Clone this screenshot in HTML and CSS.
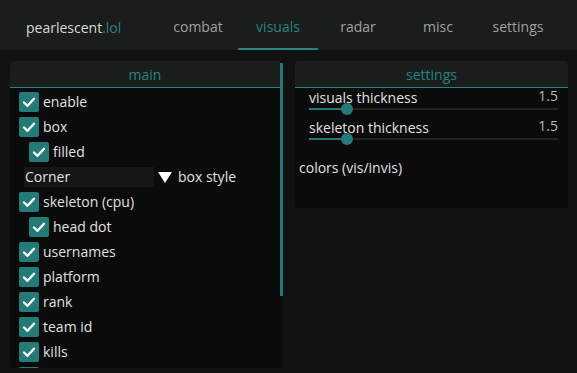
FILE: index.html
```html
<!DOCTYPE html>
<html>
<head>
<meta charset="utf-8">
<link rel="stylesheet" href="styles.css">
</head>
<body>
<header class="topbar">
  <div class="logo">pearlescent<span class="accent">.lol</span></div>
  <nav class="tabs">
    <div class="tab">combat</div>
    <div class="tab active">visuals</div>
    <div class="tab">radar</div>
    <div class="tab">misc</div>
    <div class="tab">settings</div>
  </nav>
</header>
<main class="content">
  <section class="panel panel-main">
    <div class="panel-inner">
      <div class="panel-title">main</div>
      <div class="list">
        <div class="row"><span class="cb"><svg viewBox="0 0 20 20"><path d="M5 10.5 L8.5 13.8 L15 6.8"/></svg></span><span class="lbl">enable</span></div>
        <div class="row"><span class="cb"><svg viewBox="0 0 20 20"><path d="M5 10.5 L8.5 13.8 L15 6.8"/></svg></span><span class="lbl">box</span></div>
        <div class="row sub"><span class="cb"><svg viewBox="0 0 20 20"><path d="M5 10.5 L8.5 13.8 L15 6.8"/></svg></span><span class="lbl">filled</span></div>
        <div class="row combo-row"><span class="combo">Corner</span><span class="arrow"></span><span class="lbl combo-lbl">box style</span></div>
        <div class="row"><span class="cb"><svg viewBox="0 0 20 20"><path d="M5 10.5 L8.5 13.8 L15 6.8"/></svg></span><span class="lbl">skeleton (cpu)</span></div>
        <div class="row sub"><span class="cb"><svg viewBox="0 0 20 20"><path d="M5 10.5 L8.5 13.8 L15 6.8"/></svg></span><span class="lbl">head dot</span></div>
        <div class="row"><span class="cb"><svg viewBox="0 0 20 20"><path d="M5 10.5 L8.5 13.8 L15 6.8"/></svg></span><span class="lbl">usernames</span></div>
        <div class="row"><span class="cb"><svg viewBox="0 0 20 20"><path d="M5 10.5 L8.5 13.8 L15 6.8"/></svg></span><span class="lbl">platform</span></div>
        <div class="row"><span class="cb"><svg viewBox="0 0 20 20"><path d="M5 10.5 L8.5 13.8 L15 6.8"/></svg></span><span class="lbl">rank</span></div>
        <div class="row"><span class="cb"><svg viewBox="0 0 20 20"><path d="M5 10.5 L8.5 13.8 L15 6.8"/></svg></span><span class="lbl">team id</span></div>
        <div class="row"><span class="cb"><svg viewBox="0 0 20 20"><path d="M5 10.5 L8.5 13.8 L15 6.8"/></svg></span><span class="lbl">kills</span></div>
        <div class="row"><span class="cb"></span></div>
      </div>
    </div>
    <div class="scrollbar"><div class="thumb"></div></div>
  </section>
  <section class="panel panel-settings">
    <div class="panel-title">settings</div>
    <div class="sliders">
      <div class="slider">
        <div class="slider-head"><span class="lbl">visuals thickness</span><span class="val">1.5</span></div>
        <div class="track"><div class="fill" style="width: 38px"></div><div class="knob"></div></div>
      </div>
      <div class="slider">
        <div class="slider-head"><span class="lbl">skeleton thickness</span><span class="val">1.5</span></div>
        <div class="track"><div class="fill" style="width: 38px"></div><div class="knob"></div></div>
      </div>
    </div>
    <div class="colors lbl">colors (vis/invis)</div>
  </section>
</main>
</body>
</html>
```

FILE: styles.css
```css
* { box-sizing: border-box; }
html, body {
  margin: 0;
  padding: 0;
}
body {
  width: 577px;
  height: 373px;
  overflow: hidden;
  background: #121212;
  font-family: "Open Sans", "Noto Sans", sans-serif;
  font-size: 14px;
  color: #e0e0e0;
}
.topbar {
  height: 50px;
  background: #1b1c1c;
  display: flex;
  align-items: stretch;
}
.logo {
  width: 158px;
  padding-left: 26px;
  padding-top: 4px;
  display: flex;
  align-items: center;
  font-size: 14px;
  color: #d8d8d8;
}
.accent { color: #268580; }
.tabs { display: flex; }
.tab {
  width: 80px;
  display: flex;
  align-items: center;
  justify-content: center;
  padding-top: 4px;
  color: #a0a0a0;
  font-size: 14px;
  border-bottom: 2px solid transparent;
}
.tab.active {
  color: #268580;
  border-bottom-color: #268580;
}
.content {
  display: flex;
  gap: 12px;
  padding: 11px 9px 0 10px;
  align-items: flex-start;
}
.panel {
  width: 273px;
  background: #0b0b0b;
  border-radius: 4px;
  overflow: hidden;
}
.panel-main {
  height: 307px;
  display: flex;
}
.panel-inner {
  flex: 1;
  overflow: hidden;
}
.panel-title {
  height: 27px;
  background: #1b1c1c;
  border-bottom: 1px solid #268580;
  color: #268580;
  text-align: center;
  line-height: 27px;
  font-size: 14px;
}
.scrollbar {
  width: 3px;
  flex: none;
}
.thumb {
  margin-top: 2px;
  height: 233px;
  background: #237a76;
}
.list {
  padding: 4px 0 0 9px;
}
.row {
  height: 25px;
  display: flex;
  align-items: flex-start;
}
.row.sub { padding-left: 10px; }
.cb {
  width: 20px;
  height: 20px;
  background: #237a76;
  border-radius: 2px;
  flex: none;
}
.cb svg {
  width: 20px;
  height: 20px;
  display: block;
  fill: none;
  stroke: #fff;
  stroke-width: 2.4;
  stroke-linecap: round;
  stroke-linejoin: round;
}
.lbl {
  color: #e0e0e0;
  font-size: 14px;
  line-height: 20px;
}
.row .lbl { margin-left: 4px; }
.combo-row { padding-left: 5px; }
.combo {
  width: 130px;
  height: 20px;
  background: #161616;
  line-height: 20px;
  padding-left: 1px;
  color: #e0e0e0;
}
.arrow {
  width: 0;
  height: 0;
  margin: 5px 0 0 4px;
  border-left: 7px solid transparent;
  border-right: 7px solid transparent;
  border-top: 11px solid #fff;
}
.row .combo-lbl { margin-left: 6px; }
.panel-settings {
  height: 147px;
}
.sliders {
  padding: 0 10px 0 14px;
}
.slider {
  height: 30px;
}
.slider-head {
  display: flex;
  justify-content: space-between;
  height: 16px;
  line-height: 16px;
}
.val { color: #b8b8b8; font-size: 14px; }
.track {
  position: relative;
  height: 2px;
  margin-top: 4px;
  background: #232323;
}
.fill {
  height: 2px;
  background: #237a76;
}
.knob {
  position: absolute;
  left: 32px;
  top: -5px;
  width: 12px;
  height: 12px;
  border-radius: 50%;
  background: #237a76;
}
.colors {
  display: block;
  padding: 10px 0 0 4px;
}
```
